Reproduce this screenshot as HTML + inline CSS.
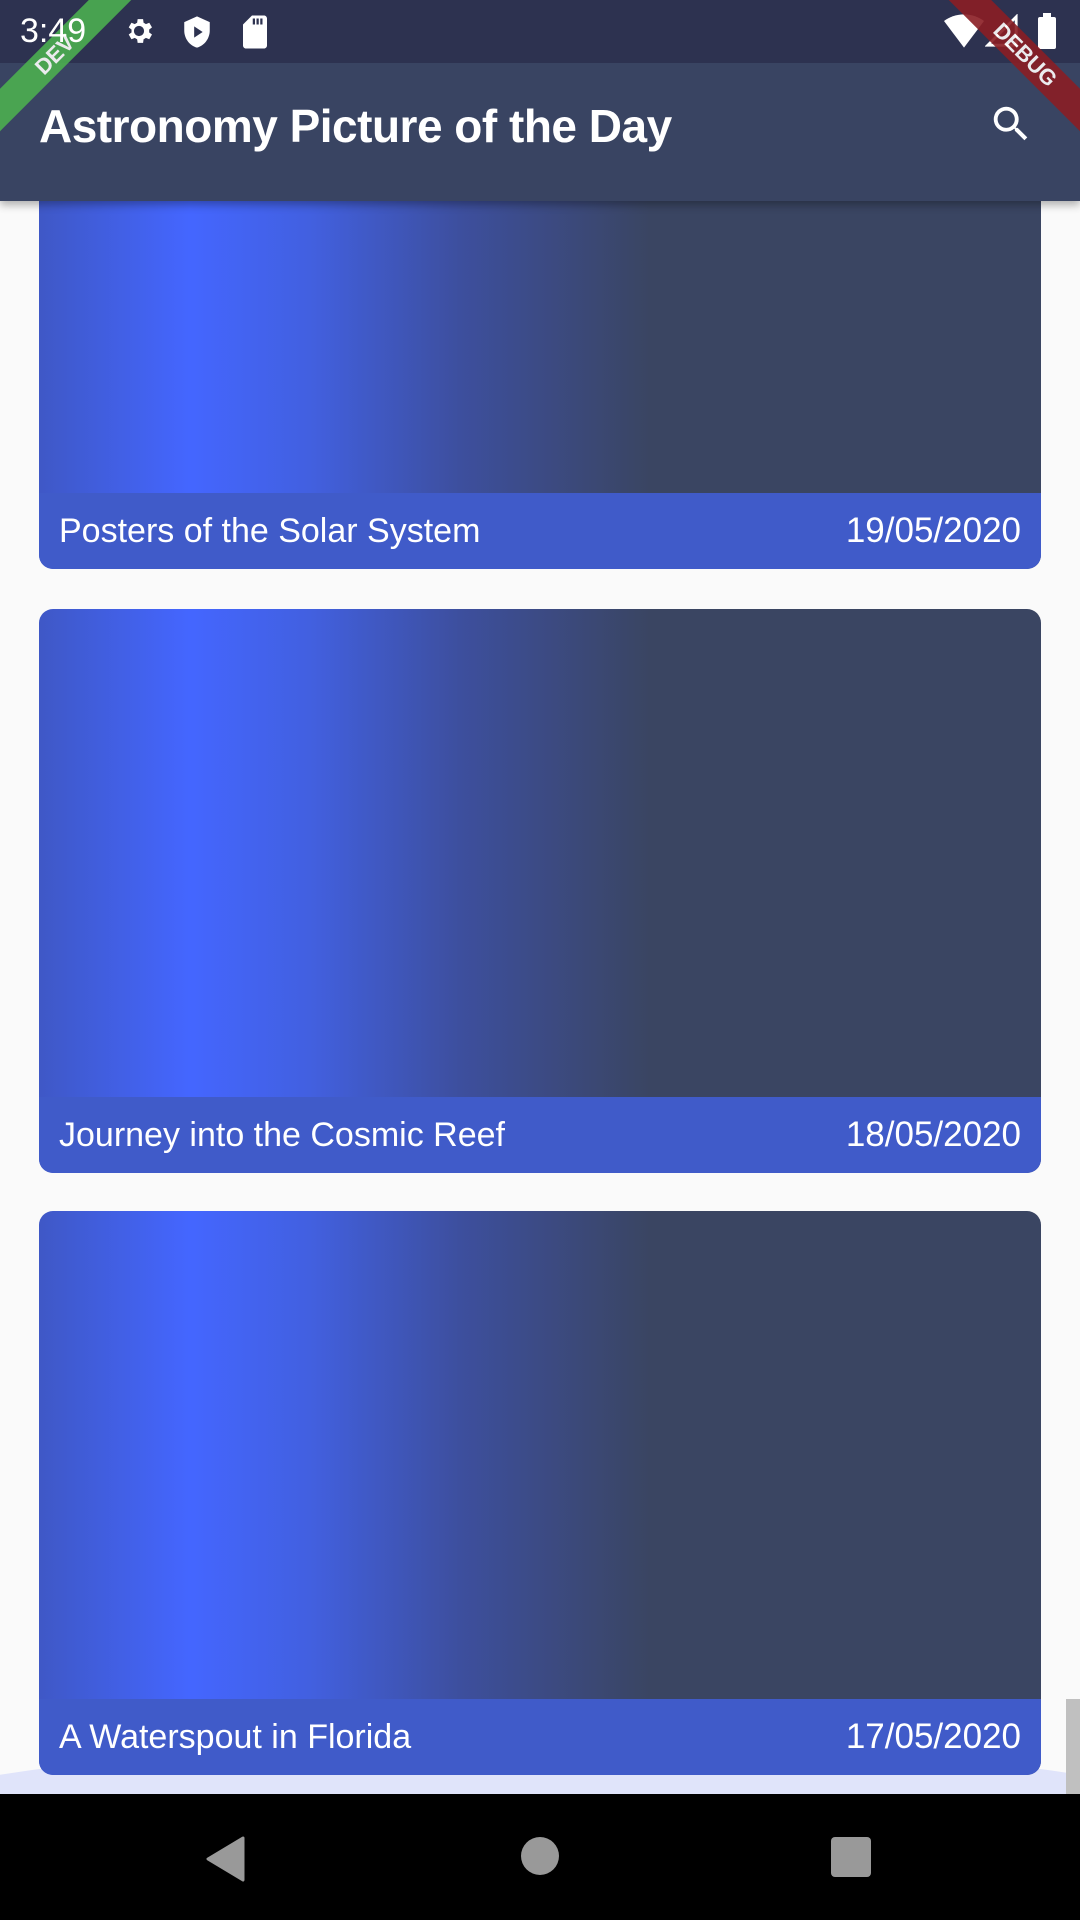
<!DOCTYPE html>
<html><head><meta charset="utf-8"><style>
*{margin:0;padding:0;box-sizing:border-box}
html,body{width:1080px;height:1920px;overflow:hidden}
body{background:#fafafa;font-family:"Liberation Sans",sans-serif;position:relative}
.card{position:absolute;left:39px;width:1002px;height:564px;border-radius:14px;overflow:hidden;
background:linear-gradient(90deg,#3f58c6 0%,#4466ff 15%,#4260e0 27%,#3d4f9e 42%,#3a4562 61%,#3a4562 100%)}
.cap{position:absolute;left:0;right:0;bottom:0;height:76px;background:#405bc9;color:#fff;font-size:34px;display:flex;justify-content:space-between;align-items:center;padding:0 20px}
.cap span:last-child{font-size:35px}
.status{position:absolute;top:0;left:0;width:1080px;height:63px;background:#2d3250;color:#fff}
.bar{position:absolute;top:63px;left:0;width:1080px;height:138px;background:#394462;box-shadow:0 4px 8px rgba(0,0,0,.3)}
.title{position:absolute;left:39px;top:36px;color:#fff;font-size:46px;font-weight:bold;letter-spacing:-0.5px}
.nav{position:absolute;top:1794px;left:0;width:1080px;height:126px;background:#000}
.ribbon{position:absolute;width:260px;height:30px;color:#fff;font-weight:bold;font-size:22px;text-align:center;line-height:30px;opacity:.9}
</style></head><body>
<div class="card" style="top:5px"><div class="cap"><span>Posters of the Solar System</span><span>19/05/2020</span></div></div>
<div class="card" style="top:609px"><div class="cap"><span>Journey into the Cosmic Reef</span><span>18/05/2020</span></div></div>
<div style="position:absolute;left:-200px;top:1740px;width:1480px;height:110px;border-radius:50%/100% 100% 0 0;background:#e0e4fa"></div>
<div class="card" style="top:1211px"><div class="cap"><span>A Waterspout in Florida</span><span>17/05/2020</span></div></div>
<div style="position:absolute;left:1066px;top:1699px;width:14px;height:95px;background:#c0c0c0"></div>
<div class="bar"><div class="title">Astronomy Picture of the Day</div>
<svg style="position:absolute;left:988px;top:38px" width="46" height="46" viewBox="0 0 24 24"><path fill="#fff" d="M15.5 14h-.79l-.28-.27A6.47 6.47 0 0016 9.5 6.5 6.5 0 109.5 16c1.61 0 3.09-.59 4.23-1.57l.27.28v.79l5 4.99L20.49 19l-4.99-5zm-6 0C7.01 14 5 11.99 5 9.5S7.01 5 9.5 5 14 7.01 14 9.5 11.99 14 9.5 14z"/></svg>
</div>
<div class="status">
<svg style="position:absolute;left:122px;top:14px" width="34" height="34" viewBox="0 0 24 24"><path fill="#fff" d="M19.14 12.94a7 7 0 000-1.88l2.03-1.58-1.920-3.32-2.39.96a7 7 0 00-1.62-.94L14.88 3.6h-3.84l-.36 2.58c-.59.24-1.13.55-1.62.94l-2.39-.96-1.92 3.32 2.03 1.58a7 7 0 000 1.88L4.75 14.5l1.92 3.32 2.39-.96c.5.39 1.03.7 1.62.94l.36 2.58h3.84l.36-2.58c.59-.24 1.13-.56 1.62-.94l2.39.96 1.92-3.32-2.03-1.56zM12 15.6a3.6 3.6 0 110-7.2 3.6 3.6 0 010 7.2z"/></svg>
<svg style="position:absolute;left:180px;top:14px" width="34" height="36" viewBox="0 0 24 24"><path fill="#fff" d="M12 1L3 5v6c0 5.5 3.8 10.7 9 12 5.2-1.3 9-6.5 9-12V5l-9-4zm-2 15V8l6 4-6 4z"/></svg>
<svg style="position:absolute;left:240px;top:14px" width="30" height="36" viewBox="0 0 20 24"><path fill="#fff" d="M16 1H8L2 7v14c0 1.1.9 2 2 2h12c1.1 0 2-.9 2-2V3c0-1.1-.9-2-2-2zM10 7H8.5V3H10v4zm2.5 0H11V3h1.5v4zM15 7h-1.5V3H15v4z"/></svg>
<svg style="position:absolute;left:944px;top:14px" width="40" height="34" viewBox="0 0 24 20"><path fill="#fff" d="M12 20L0 4c3.3-2.5 7.5-4 12-4s8.7 1.5 12 4L12 20z"/></svg>
<svg style="position:absolute;left:985px;top:14px" width="34" height="34" viewBox="0 0 24 24"><path fill="none" stroke="#fff" stroke-width="2" d="M22 2L2 22h20z"/></svg>
<div style="position:absolute;left:1038px;top:17px;width:18px;height:32px;background:#fff;border-radius:2px"></div>
<div style="position:absolute;left:1043px;top:13px;width:8px;height:5px;background:#fff"></div>
</div>
<div class="ribbon" style="background:#4caf50;left:-75px;top:40px;transform:rotate(-45deg)">DEV</div>
<div class="ribbon" style="background:#8b1e24;left:895px;top:40px;transform:rotate(45deg)">DEBUG</div>
<div style="position:absolute;left:20px;top:12px;font-size:34px;color:#fff">3:49</div>
<div class="nav">
<svg style="position:absolute;left:205px;top:42px" width="40" height="46" viewBox="0 0 40 46"><path fill="#999" d="M38 2L3 23l35 21z" stroke="#999" stroke-width="3" stroke-linejoin="round"/></svg>
<div style="position:absolute;left:521px;top:43px;width:38px;height:38px;border-radius:50%;background:#999"></div>
<div style="position:absolute;left:831px;top:43px;width:40px;height:40px;border-radius:4px;background:#999"></div>
</div>
</body></html>
